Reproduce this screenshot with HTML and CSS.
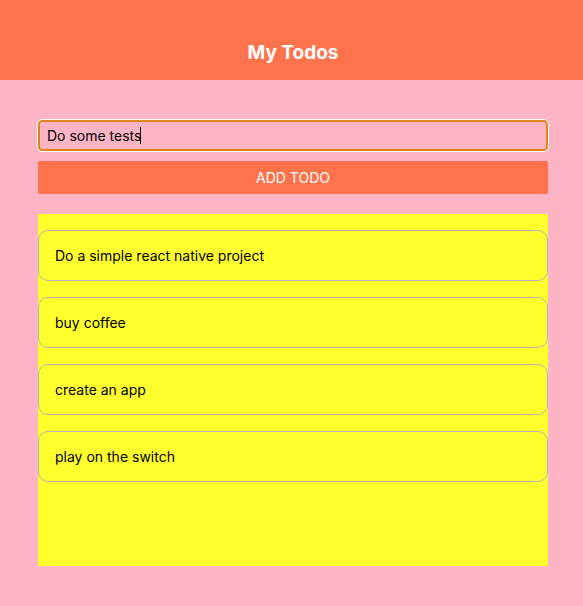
FILE: index.html
```html
<!DOCTYPE html>
<html lang="en">
<head>
<meta charset="utf-8">
<meta name="viewport" content="width=device-width, initial-scale=1">
<title>My Todos</title>
<link rel="stylesheet" href="styles.css">
</head>
<body>
<header class="header">
  <h1 class="title">My Todos</h1>
</header>
<main class="content">
  <form class="todo-form">
    <div class="field">
      <input class="todo-input" type="text" aria-label="New todo" value="Do some tests" autofocus>
      <span class="caret" aria-hidden="true"></span>
    </div>
    <button class="add-button" type="button">ADD TODO</button>
  </form>
  <ul class="todo-list">
    <li class="todo">Do a simple react native project</li>
    <li class="todo">buy coffee</li>
    <li class="todo">create an app</li>
    <li class="todo">play on the switch</li>
  </ul>
</main>
</body>
</html>
```
FILE: styles.css
```css
* {
  box-sizing: border-box;
}

body {
  margin: 0;
  min-height: 100vh;
  display: flex;
  flex-direction: column;
  background: #fdb5c5;
  color: #000;
  font-family: Inter, "Liberation Sans", sans-serif;
  font-size: 14px;
}

.header {
  padding: 39px 35px 13px 38px;
  background: #fe724c;
}

.title {
  margin: 0;
  color: #fff;
  font-size: 19px;
  line-height: 28px;
  font-weight: 700;
  text-align: center;
}

.content {
  flex: 1;
  display: flex;
  flex-direction: column;
  padding: 40px 35px 40px 38px;
}

.todo-form {
  display: flex;
  flex-direction: column;
  gap: 10px;
}

.field {
  position: relative;
  display: flex;
}

.todo-input {
  flex: 1;
  min-width: 0;
  height: 31px;
  padding: 0 7px;
  border: 2px solid #e08519;
  border-radius: 4px;
  outline: 1px solid #fff;
  background: transparent;
  color: #000;
  caret-color: transparent;
  font: inherit;
}

.caret {
  position: absolute;
  top: 7px;
  left: 102px;
  width: 1px;
  height: 17px;
  background: #000;
}

.add-button {
  height: 33px;
  padding: 0 8px;
  border: 0;
  border-radius: 2px;
  background: #fe724c;
  color: #fff;
  font: inherit;
}

.todo-list {
  flex: 1;
  display: flex;
  flex-direction: column;
  gap: 16px;
  margin: 20px 0 0;
  padding: 16px 0;
  background: #ffff2e;
  list-style: none;
}

.todo {
  padding: 16px;
  border: 1px solid #b3b3b3;
  border-radius: 10px;
  line-height: 17px;
}
```
